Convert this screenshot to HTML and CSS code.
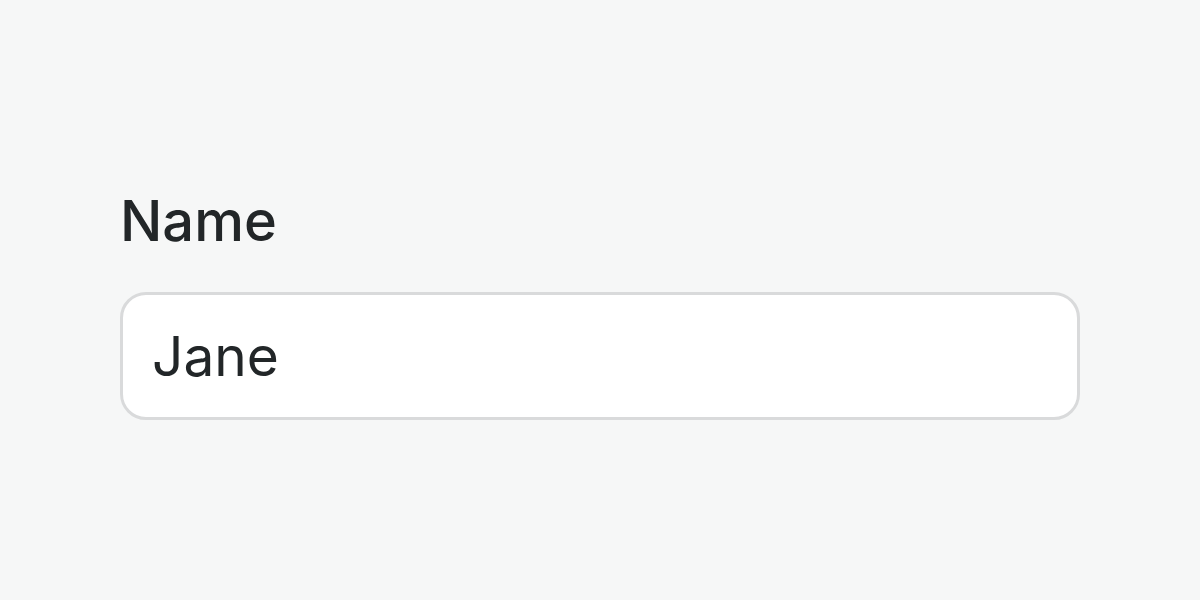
FILE: index.html
```html
<!DOCTYPE html>
<html lang="en">
<head>
<meta charset="utf-8">
<title>Name field</title>
<link rel="stylesheet" href="styles.css">
</head>
<body>
<main class="page">
  <div class="field">
    <label class="field-label" for="name">Name</label>
    <input class="field-input" id="name" type="text" value="Jane">
  </div>
</main>
</body>
</html>
```
FILE: styles.css
```css
html, body {
  margin: 0;
  padding: 0;
  background: #f6f7f7;
}
body {
  width: 1200px;
  height: 600px;
  font-family: Inter, "Noto Sans", sans-serif;
  color: #222628;
}
.page {
  padding: 187px 120px 0;
}
.field {
  display: flex;
  flex-direction: column;
  gap: 37px;
}
.field-label {
  font-size: 56px;
  font-weight: 500;
  line-height: 68px;
  color: #222628;
}
.field-input {
  box-sizing: border-box;
  width: 960px;
  height: 128px;
  margin: 0;
  padding: 0 29px;
  border: 3px solid #d9dadb;
  border-radius: 26px;
  background: #ffffff;
  font-family: Inter, "Noto Sans", sans-serif;
  font-size: 55px;
  font-weight: 400;
  color: #222628;
  outline: none;
}
```
